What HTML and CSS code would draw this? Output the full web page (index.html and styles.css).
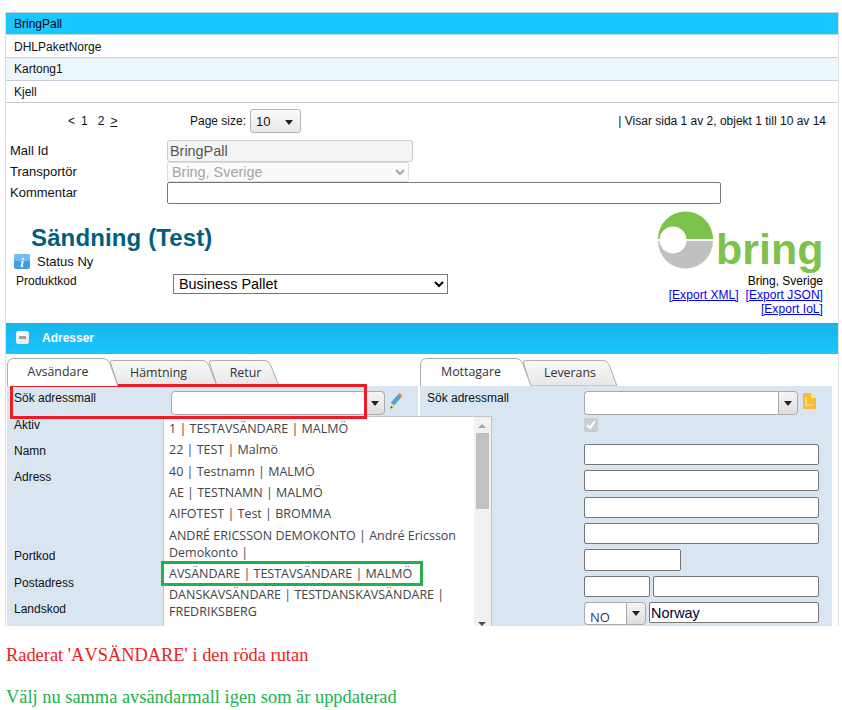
FILE: index.html
```html
<!DOCTYPE html>
<html lang="sv">
<head>
<meta charset="utf-8">
<title>Sändning</title>
<link rel="stylesheet" href="styles.css">
</head>
<body>
<main class="page">
  <div class="frame">
    <ul class="list">
      <li class="list-row row-selected">BringPall</li>
      <li class="list-row row-second">DHLPaketNorge</li>
      <li class="list-row row-alt">Kartong1</li>
      <li class="list-row row-last">Kjell</li>
    </ul>

    <div class="pager">
      <div class="pager-links"><span class="pl">&lt;</span><span>1</span><span class="p2">2</span><u>&gt;</u></div>
      <div class="page-size">
        <span>Page size:</span>
        <div class="size-select"><span>10</span><i class="tri"></i></div>
      </div>
      <div class="pager-info">| Visar sida 1 av 2, objekt 1 till 10 av 14</div>
    </div>

    <div class="tmpl-form">
      <label class="tmpl-label">Mall Id</label>
      <input class="inp-id" value="BringPall" readonly>
      <label class="tmpl-label">Transportör</label>
      <select class="sel-carrier" disabled><option>Bring, Sverige</option></select>
      <label class="tmpl-label">Kommentar</label>
      <input class="inp-comment">
    </div>

    <section class="shipment">
      <div class="ship-left">
        <h1 class="ship-title">Sändning (Test)</h1>
        <div class="status">
          <svg class="info-ico" width="16" height="15" viewBox="0 0 16 15"><rect x="0" y="0" width="16" height="15" rx="2.5" fill="#3f9fe0"/><rect x="0" y="0" width="16" height="7" rx="2.5" fill="#6fc0f2"/><text x="8" y="12.5" text-anchor="middle" class="info-i">i</text></svg>
          <span>Status Ny</span>
        </div>
        <div class="product">
          <span class="product-label">Produktkod</span>
          <select class="sel-product"><option>Business Pallet</option></select>
        </div>
      </div>
      <div class="ship-right">
        <svg class="logo" width="166" height="62" viewBox="0 0 166 62">
          <path d="M1 27 A27.5 27.5 0 0 1 56 27 Z" fill="#7dc24b"/>
          <path d="M1 29 A27.5 27.5 0 0 0 56 29 Z" fill="#c0c0c0"/>
          <circle cx="16" cy="28" r="13.5" fill="#fff"/>
          <text x="59" y="52" class="logo-word">bring</text>
        </svg>
        <div>Bring, Sverige</div>
        <div class="export"><a href="#">[Export XML]</a>&nbsp; <a href="#">[Export JSON]</a></div>
        <div class="export"><a href="#">[Export IoL]</a></div>
      </div>
    </section>

    <div class="bar">
      <svg width="13" height="13" viewBox="0 0 13 13"><rect width="13" height="13" rx="2" fill="#ececec"/><rect x="1" y="1" width="11" height="5" fill="#f8f8f8"/><rect x="3" y="5" width="7" height="3" fill="#a0a0a0"/></svg>
      <span>Adresser</span>
    </div>

    <div class="addr-cols">
      <div class="addr-col">
        <div class="tabs">
          <div class="tab tab-active w111">
            <svg viewBox="0 0 111 28" preserveAspectRatio="none"><path d="M.5 28V7Q.5.5 7 .5H95Q101 .5 103 6L111 28" fill="#fff" stroke="#aaa"/></svg>
            <span>Avsändare</span>
          </div>
          <div class="tab w107 tab-hamt">
            <svg viewBox="0 0 107 26" preserveAspectRatio="none"><path d="M0 1Q2 .5 7 .5H92Q97 .5 99 6L107 26H8Z" fill="url(#tg)" stroke="#aaa"/><defs><linearGradient id="tg" x1="0" y1="0" x2="0" y2="1"><stop offset="0" stop-color="#fafafa"/><stop offset="1" stop-color="#e6e6e6"/></linearGradient></defs></svg>
            <span>Hämtning</span>
          </div>
          <div class="tab w70 tab-retur">
            <svg viewBox="0 0 70 26" preserveAspectRatio="none"><path d="M0 1Q2 .5 7 .5H56Q60 .5 62 6L70 26H8Z" fill="url(#tg)" stroke="#aaa"/></svg>
            <span>Retur</span>
          </div>
        </div>
        <div class="panel panel-left">
          <div class="lbl">Sök adressmall</div>
          <div class="ctl">
            <div class="combo combo-wide"><div class="combo-field"></div><div class="combo-btn"><i class="tri"></i></div></div>
            <svg class="side-ico" width="14" height="16" viewBox="0 0 14 16"><path d="M2.5 11L10 2.5" stroke="#4fa3dc" stroke-width="4.2"/><path d="M9.5 3L11 1.2" stroke="#e8963c" stroke-width="4.2"/><path d="M.6 15.4L1 10.5 4.8 13.8Z" fill="#f2e23a"/><path d="M.6 15.4L.8 13 2.8 14.8Z" fill="#3a3a3a"/></svg>
          </div>
          <div class="lbl">Aktiv</div><div></div>
          <div class="lbl">Namn</div><div></div>
          <div class="lbl">Adress</div><div></div>
          <div></div><div></div>
          <div></div><div></div>
          <div class="lbl">Portkod</div><div></div>
          <div class="lbl">Postadress</div><div></div>
          <div class="lbl">Landskod</div><div></div>
        </div>
      </div>

      <div class="addr-col">
        <div class="tabs">
          <div class="tab tab-active w111">
            <svg viewBox="0 0 111 28" preserveAspectRatio="none"><path d="M.5 28V7Q.5.5 7 .5H95Q101 .5 103 6L111 28" fill="#fff" stroke="#aaa"/></svg>
            <span>Mottagare</span>
          </div>
          <div class="tab w101">
            <svg viewBox="0 0 101 26" preserveAspectRatio="none"><path d="M0 1Q2 .5 7 .5H86Q91 .5 93 6L101 26H8Z" fill="url(#tg)" stroke="#aaa"/></svg>
            <span>Leverans</span>
          </div>
        </div>
        <div class="panel">
          <div class="lbl">Sök adressmall</div>
          <div class="ctl">
            <div class="combo combo-wide"><div class="combo-field"></div><div class="combo-btn"><i class="tri"></i></div></div>
            <svg class="side-ico doc-ico" width="13" height="16" viewBox="0 0 13 16"><path d="M0 1Q0 0 1 0H8L13 5V15Q13 16 12 16H1Q0 16 0 15Z" fill="#f2bd3c"/><path d="M8 0L13 5H8Z" fill="#fbe39a"/><path d="M3 4V12H10" fill="none" stroke="#fbe08a" stroke-width="1.6"/></svg>
          </div>
          <div></div><div><span class="check"><svg width="10" height="9" viewBox="0 0 10 9"><path d="M1 5L4 8 9 1" fill="none" stroke="#fff" stroke-width="2"/></svg></span></div>
          <div></div><div><input class="inp inp-full"></div>
          <div></div><div><input class="inp inp-full"></div>
          <div></div><div><input class="inp inp-full"></div>
          <div></div><div><input class="inp inp-full"></div>
          <div></div><div><input class="inp inp-port"></div>
          <div></div><div class="ctl-gap"><input class="inp inp-zip"><input class="inp inp-city"></div>
          <div></div>
          <div class="ctl-gap">
            <div class="combo combo-cc"><div class="combo-field cc-text">NO</div><div class="combo-btn"><i class="tri"></i></div></div>
            <input class="inp inp-country" value="Norway">
          </div>
        </div>
      </div>
    </div>

    <div class="popup">
      <ul class="popup-list">
        <li>1 | TESTAVSÄNDARE | MALMÖ</li>
        <li>22 | TEST | Malmö</li>
        <li>40 | Testnamn | MALMÖ</li>
        <li>AE | TESTNAMN | MALMÖ</li>
        <li>AIFOTEST | Test | BROMMA</li>
        <li>ANDRÉ ERICSSON DEMOKONTO | André Ericsson Demokonto |</li>
        <li>AVSÄNDARE | TESTAVSÄNDARE | MALMÖ</li>
        <li>DANSKAVSÄNDARE | TESTDANSKAVSÄNDARE | FREDRIKSBERG</li>
      </ul>
      <div class="scroll">
        <i class="sc-up"></i>
        <div class="sc-thumb"></div>
        <i class="sc-down"></i>
      </div>
    </div>

    <div class="mark mark-red"></div>
    <div class="mark mark-green"></div>
  </div>

  <p class="note note-red">Raderat 'AVSÄNDARE' i den röda rutan</p>
  <p class="note note-green">Välj nu samma avsändarmall igen som är uppdaterad</p>
</main>
</body>
</html>
```

FILE: styles.css
```css
* { box-sizing: border-box; }
html, body { margin: 0; padding: 0; background: #fff; }
body { font: 12px/14px "Liberation Sans", Arial, sans-serif; color: #111; }
.page { width: 842px; height: 710px; padding-top: 12px; overflow: hidden; }

.frame {
  position: relative;
  width: 834px;
  height: 614px;
  margin-left: 5px;
  border-left: 1px solid #ddd;
  border-right: 1px solid #ddd;
  overflow: hidden;
}

.list { list-style: none; margin: 0; padding: 0; border-top: 1px solid #ccc; }
.list-row { height: 23px; padding: 4px 8px 0; border-bottom: 1px solid #ccd; line-height: 15px; }
.row-selected { height: 22px; background: #1ac6ff; border-bottom-color: #bcdfe8; color: #000; }
.row-second { padding-top: 5px; }
.row-alt { background: #ebf7fa; }
.row-last { height: 22px; border-bottom-color: #ccc; }

.pager { display: flex; align-items: center; height: 36px; padding: 0 12px 0 62px; }
.pager-links { display: flex; width: 122px; }
.pl { margin-right: 6px; }
.p2 { margin: 0 6px 0 10px; }
.page-size { display: flex; align-items: center; gap: 4px; }
.size-select {
  display: flex; align-items: center; justify-content: space-between;
  width: 51px; height: 24px; padding: 2px 7px 0 5px;
  border: 1px solid #b5b5b5; border-radius: 3px;
  background: linear-gradient(#fafafa, #e8e8e8);
  font-size: 13px;
}
.tri { display: block; width: 0; height: 0; border: 4.5px solid transparent; border-top: 5px solid #222; border-bottom: 0; }
.pager-info { margin-left: auto; }

.tmpl-form { display: grid; grid-template-columns: 157px 1fr; grid-template-rows: 22px 20px 22px; padding: 1px 0 0 4px; height: 65px; }
.tmpl-label { font-size: 13px; line-height: 22px; }
.tmpl-form .tmpl-label:nth-of-type(2) { line-height: 20px; }
.inp-id {
  width: 246px; height: 22px; padding: 0 2px; margin: 0;
  border: 1px solid #ccc; border-radius: 3px; background: #f4f4f4;
  color: #555; font: 14.4px "Liberation Sans", Arial, sans-serif; outline: 0;
}
.sel-carrier {
  width: 242px; height: 20px; margin: 0; padding: 0;
  font: 14.4px "Liberation Sans", Arial, sans-serif;
}
.inp-comment { width: 554px; height: 22px; margin: 0; border: 1px solid #767676; border-radius: 2px; background: #fff; }

.shipment { display: flex; justify-content: space-between; height: 119px; padding: 8px 15px 0 0; }
.ship-left { padding-top: 14px; }
.ship-title { margin: 0 0 1px 25px; font: bold 24px/24px "Liberation Sans", Arial, sans-serif; letter-spacing: .13px; color: #005f80; }
.status { display: flex; align-items: center; gap: 7px; height: 20px; padding-left: 8px; font-size: 13px; line-height: 16px; }
.status span { padding-top: 1px; }
.info-ico { display: block; }
.info-i { font: italic bold 13px "Liberation Serif", serif; fill: #fff; }
.product { display: flex; align-items: flex-start; padding: 3px 0 0 10px; }
.product-label { width: 157px; line-height: 14px; }
.sel-product { width: 275px; height: 20px; margin: 0; padding-left: 1px; font: 14.4px "Liberation Sans", Arial, sans-serif; background: #fff; color: #000; }
.ship-right { width: 170px; text-align: right; white-space: nowrap; color: #000; }
.logo { display: block; margin-left: auto; overflow: visible; }
.logo-word { font: bold 43px "Liberation Sans", Arial, sans-serif; fill: #7dc24b; }
.ship-right a { color: #00e; }
.export { letter-spacing: .06px; }

.bar { display: flex; align-items: flex-start; gap: 13px; height: 31px; margin: 0 -1px; padding: 8px 0 0 11px; color: #fff; font-weight: bold; background: linear-gradient(#18b4e9, #1ac6ff); }
.bar span { padding-top: 0; }
.bar svg { display: block; }

.addr-cols { display: flex; gap: 2px; padding: 4px 0 0 1px; }
.addr-col { width: 411px; }
.addr-col + .addr-col { width: 412px; }

.tabs { display: flex; height: 28px; align-items: flex-end; }
.tab { position: relative; display: flex; align-items: center; justify-content: center; height: 26px; margin-left: -8px; padding: 0 8px 1px 0; font: 12.4px/14px "Open Sans", sans-serif; color: #333; }
.tab:first-child { margin-left: 0; }
.tab svg { position: absolute; inset: 0; width: 100%; height: 100%; }
.tab span { position: relative; }
.tab-active { height: 28px; z-index: 2; padding: 0 9px 1px 0; }
.tab-hamt { padding-right: 10px; }
.tab-retur { padding: 0 0 1px 3px; }
.w111 { width: 111px; }
.w107 { width: 107px; }
.w101 { width: 94px; padding: 0 0 1px 0; }
.w70 { width: 70px; }

.panel {
  display: grid;
  grid-template-columns: 157px 1fr;
  grid-template-rows: 26.67px;
  grid-auto-rows: 26.33px;
  height: 240px;
  padding: 5px 0 0 7px;
  background: #d9e5f1;
  overflow: hidden;
}
.lbl { line-height: 15px; color: #111; }
.ctl { display: flex; align-items: flex-start; }
.combo { display: flex; height: 24px; }
.combo-wide { width: 214px; }
.combo-field { flex: 1; border: 1px solid #aaa; border-right: 0; border-radius: 4px 0 0 4px; background: #fff; }
.combo-btn {
  display: flex; align-items: center; justify-content: center;
  width: 20px; border: 1px solid #aaa; border-radius: 0 4px 4px 0;
  background: linear-gradient(#f5f5f5, #dedede);
}
.panel-left .combo-field { border-right: 1px solid #aaa; }
.side-ico { display: block; margin: 2px 0 0 5px; }
.check { display: flex; align-items: center; justify-content: center; width: 14px; height: 14px; background: #cdcdcd; border-radius: 2px; }
.inp { display: block; height: 21px; margin: 0; padding: 0 2px; border: 1px solid #767676; border-radius: 2px; background: #fff; font: 14.4px/18px "Liberation Sans", Arial, sans-serif; color: #000033; }
.inp-full { width: 235px; }
.inp-port { width: 97px; height: 22px; }
.inp-zip { width: 66px; }
.inp-city { width: 166px; }
.ctl-gap { display: flex; gap: 3px; align-items: flex-start; }
.combo-cc { width: 62px; height: 23px; margin-right: 1px; }
.cc-text { padding: 6px 0 0 5px; font: 13px/16px "Open Sans", sans-serif; color: #1f3a6e; border-bottom-left-radius: 4px; }
.inp-country { width: 170px; margin-left: -1px; padding: 1px 1px 0; }

.popup {
  position: absolute; left: 157px; top: 404px;
  display: flex; width: 329px; height: 230px;
  border: 1px solid #c5c5c5; background: #fff;
}
.popup-list {
  flex: 1; list-style: none; margin: 0; padding: 1px 0 0;
  font: 12.5px/17px "Open Sans", sans-serif; color: #444;
}
.popup-list li { padding: 2.17px 5px; }
.scroll { position: relative; width: 17px; background: #f1f1f1; }
.sc-thumb { position: absolute; left: 2px; top: 16px; width: 13px; height: 76px; background: #c1c1c1; }
.sc-up, .sc-down { position: absolute; left: 4px; width: 0; height: 0; border: 4px solid transparent; border-top: 0; border-bottom: 4px solid #a3a3a3; }
.sc-up { top: 7px; }
.sc-down { top: 205px; border-bottom: 0; border-top: 4px solid #505050; }

.mark { position: absolute; border-style: solid; border-width: 3px; }
.mark-red { left: 4px; top: 372px; width: 357px; height: 35px; border-color: #ed1c24; }
.mark-green { left: 155px; top: 549px; width: 262px; height: 25px; border-color: #22b14c; }

.note { margin: 0 0 0 6px; font: 18.4px/21px "Liberation Serif", "Times New Roman", serif; font-kerning: none; }
.note-red { margin-top: 19px; color: #ed1c24; }
.note-green { margin-top: 21px; color: #22b14c; }
```
